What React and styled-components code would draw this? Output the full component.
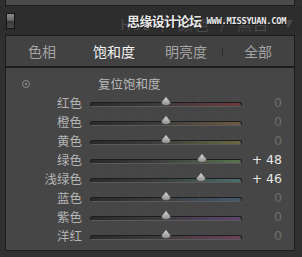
import React from 'react';
import styled, { createGlobalStyle } from 'styled-components';

const GlobalStyle = createGlobalStyle`
    html, body {
        margin: 0;
        padding: 0;
        background: #2c2c2c;
    }
    * {
        box-sizing: border-box;
    }
`

const Frame = styled.div`
    width: 302px;
    height: 257px;
    display: flex;
    flex-flow: column;
    background: #303030;
    font-family: "Noto Sans CJK SC", "Noto Sans", sans-serif;
    overflow: hidden;
`

const TopStrip = styled.div`
    height: 6px;
    margin: 0 7px 0 5px;
    background: #4b4b4b;
    border: 1px solid #1c1c1c;
    border-top: none;
`

const Header = styled.div`
    position: relative;
    height: 29px;
    display: flex;
    align-items: center;
    padding: 0 8px 0 6px;
    background: #2d2d2d;
`

const Toggle = styled.div`
    width: 9px;
    height: 16px;
    border: 1px solid #151515;
    background: linear-gradient(#8a8a8a 0%, #6a6a6a 45%, #3a3a3a 50%, #4a4a4a 100%);
`

const PanelTitle = styled.div`
    flex: 1;
    display: flex;
    justify-content: flex-end;
    align-items: center;
    gap: 10px;
    font-size: 15px;
    color: #4a4a4a;
    letter-spacing: 1px;
    margin-top: 6px;

    span:last-child {
        font-size: 10px;
        margin-left: 4px;
    }
`

const Watermark = styled.div`
    position: absolute;
    left: 127px;
    top: 5px;
    display: flex;
    align-items: center;
    gap: 5px;
    color: #e8e8e8;
    text-shadow: 1px 1px 0 #1a1a1a;

    b {
        font-size: 13px;
        font-weight: 700;
        letter-spacing: -0.6px;
    }

    i {
        font-style: normal;
        font-family: "DejaVu Sans Mono", monospace;
        font-weight: bold;
        font-size: 8.8px;
        letter-spacing: -0.3px;
    }
`

const Panel = styled.div`
    margin: 0 7px 0 5px;
    border: 1px solid #1c1c1c;
`

const TabBar = styled(Panel)`
    height: 32px;
    display: grid;
    grid-template-columns: repeat(4, 1fr);
    align-items: center;
    background: #424242;
`

const Tab = styled.div`
    position: relative;
    text-align: center;
    font-size: 14px;
    color: ${({ active }) => active ? '#f2f2f2' : '#a4a4a4'};

    & + &::before {
        content: "";
        position: absolute;
        left: 0;
        top: 6px;
        height: 10px;
        border-left: 1px solid #2e2e2e;
    }
`

const Content = styled(Panel)`
    height: 184px;
    background: #464646;
    padding: 6px 0 0 0;
`

const ResetRow = styled.div`
    display: flex;
    align-items: center;
    height: 19px;
    padding-left: 16px;
    font-size: 12.5px;
    color: #b8b8b8;

    span {
        margin-left: 68px;
    }
`

const ResetIcon = styled.div`
    width: 8px;
    height: 8px;
    border-radius: 50%;
    border: 1px solid #8a8a8a;
    display: flex;
    justify-content: center;
    align-items: center;

    &::after {
        content: "";
        width: 2px;
        height: 2px;
        border-radius: 50%;
        background: #9a9a9a;
    }
`

const Row = styled.div`
    display: grid;
    grid-template-columns: 76px 152px 38px;
    column-gap: 8px;
    align-items: center;
    height: 19px;
`

const Label = styled.div`
    text-align: right;
    font-size: 12.5px;
    color: #b4b4b4;
`

const Track = styled.div`
    position: relative;
    height: 5px;
    margin-top: 3px;
    border-radius: 2.5px;
    border: 1px solid #1e1e1e;
    border-bottom-color: #5a5a5a;
    background: linear-gradient(90deg, #2a2a2a 0%, #3a3a3a 40%, ${({ tint }) => tint} 100%);
`

const Ticks = styled.div`
    position: absolute;
    left: 6px;
    right: 6px;
    top: -6px;
    height: 3px;
    background: repeating-linear-gradient(90deg, #525252 0 1px, transparent 1px 17px);
    opacity: 0.6;
`

const Thumb = styled.svg`
    position: absolute;
    top: -7px;
    width: 10px;
    height: 10px;
    transform: translateX(-50%);
`

const Value = styled.div`
    text-align: right;
    padding-right: 6px;
    font-size: 12.5px;
    font-family: "DejaVu Sans", sans-serif;
    color: ${({ changed }) => changed ? '#e6e6e6' : '#6e6e6e'};
`

const colors = [
    { name: '红色', value: 0, tint: '#6e3a3e' },
    { name: '橙色', value: 0, tint: '#6e5a42' },
    { name: '黄色', value: 0, tint: '#6a6a44' },
    { name: '绿色', value: 48, tint: '#5a7450' },
    { name: '浅绿色', value: 46, tint: '#4a6e6a' },
    { name: '蓝色', value: 0, tint: '#44586e' },
    { name: '紫色', value: 0, tint: '#5e4470' },
    { name: '洋红', value: 0, tint: '#6e405a' },
];

const tabs = ['色相', '饱和度', '明亮度', '全部'];

function Slider({ value, tint }) {
    const pct = 50 + value * 0.5;
    return (
        <Track tint={tint}>
            <Ticks />
            <Thumb viewBox="0 0 10 10" style={{ left: `${pct}%` }}>
                <defs>
                    <linearGradient id="thumbGrad" x1="0" y1="0" x2="0" y2="1">
                        <stop offset="0" stopColor="#dcdcdc" />
                        <stop offset="1" stopColor="#8a8a8a" />
                    </linearGradient>
                </defs>
                <path d="M5 0.5 L9.5 6 Q9.5 9.5 5 9.5 Q0.5 9.5 0.5 6 Z" fill="url(#thumbGrad)" stroke="#3a3a3a" strokeWidth="0.6" />
            </Thumb>
        </Track>
    )
}

function App() {
    return (
        <Frame>
            <GlobalStyle />
            <TopStrip />
            <Header>
                <Toggle />
                <PanelTitle>
                    <span>HSL</span><span>/</span><span>颜色</span><span>/</span><span>黑白</span><span>▼</span>
                </PanelTitle>
                <Watermark>
                    <b>思缘设计论坛</b>
                    <i>WWW.MISSYUAN.COM</i>
                </Watermark>
            </Header>
            <TabBar>
                {tabs.map((t, idx) => (
                    <Tab key={t} active={idx === 1}>{t}</Tab>
                ))}
            </TabBar>
            <Content>
                <ResetRow>
                    <ResetIcon />
                    <span>复位饱和度</span>
                </ResetRow>
                {colors.map(c => (
                    <Row key={c.name}>
                        <Label>{c.name}</Label>
                        <Slider value={c.value} tint={c.tint} />
                        <Value changed={c.value !== 0}>{c.value > 0 ? `+ ${c.value}` : c.value}</Value>
                    </Row>
                ))}
            </Content>
        </Frame>
    )
}

export default App;
